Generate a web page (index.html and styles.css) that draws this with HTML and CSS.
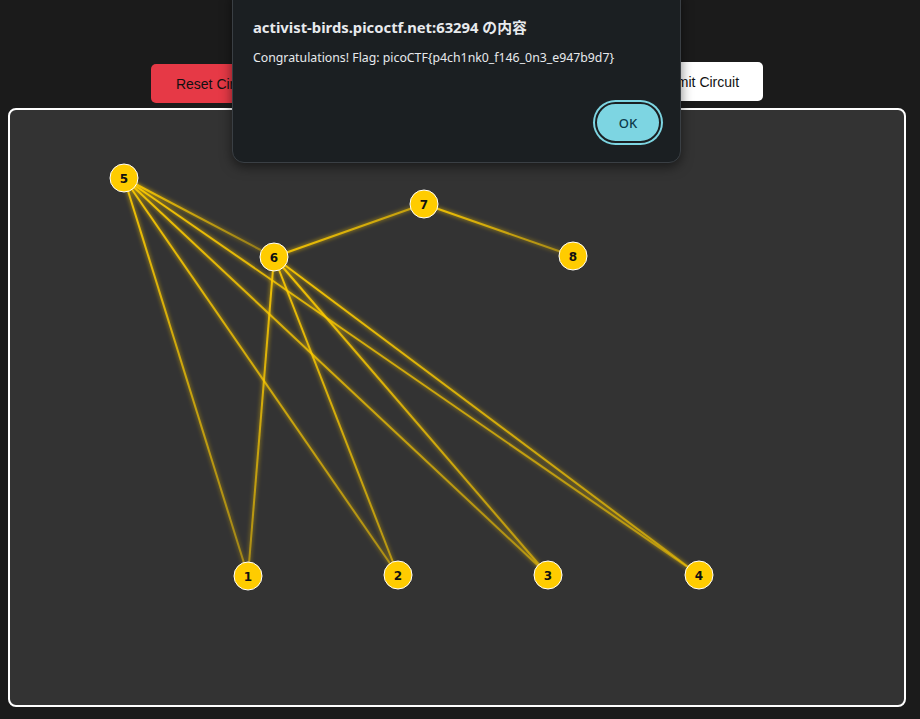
FILE: index.html
```
<!DOCTYPE html>
<html lang="ja">
<head>
<meta charset="utf-8">
<title>Circuit</title>
<link rel="stylesheet" href="styles.css">
</head>
<body>
<div class="controls">
  <button class="btn btn-reset">Reset Circuit</button>
  <button class="btn btn-submit">Submit Circuit</button>
</div>
<div class="board">
  <svg class="graph" width="894" height="595" viewBox="0 0 894 595">
    <defs>
      <filter id="glow" x="-20%" y="-20%" width="140%" height="140%">
        <feGaussianBlur stdDeviation="2" result="b"/>
        <feMerge><feMergeNode in="b"/><feMergeNode in="SourceGraphic"/></feMerge>
      </filter>
      <linearGradient id="g51" gradientUnits="userSpaceOnUse" x1="114" y1="68" x2="238" y2="466"><stop offset="0" stop-color="#ffcc00" stop-opacity="0.9"/><stop offset="1" stop-color="#ffcc00" stop-opacity="0.45"/></linearGradient>
      <linearGradient id="g52" gradientUnits="userSpaceOnUse" x1="114" y1="68" x2="388" y2="465"><stop offset="0" stop-color="#ffcc00" stop-opacity="0.9"/><stop offset="1" stop-color="#ffcc00" stop-opacity="0.5"/></linearGradient>
      <linearGradient id="g53" gradientUnits="userSpaceOnUse" x1="114" y1="68" x2="538" y2="465"><stop offset="0" stop-color="#ffcc00" stop-opacity="0.9"/><stop offset="1" stop-color="#ffcc00" stop-opacity="0.5"/></linearGradient>
      <linearGradient id="g54" gradientUnits="userSpaceOnUse" x1="114" y1="68" x2="689" y2="465"><stop offset="0" stop-color="#ffcc00" stop-opacity="0.9"/><stop offset="1" stop-color="#ffcc00" stop-opacity="0.5"/></linearGradient>
      <linearGradient id="g56" gradientUnits="userSpaceOnUse" x1="114" y1="68" x2="264" y2="147"><stop offset="0" stop-color="#ffcc00" stop-opacity="0.9"/><stop offset="1" stop-color="#ffcc00" stop-opacity="0.35"/></linearGradient>
      <linearGradient id="g61" gradientUnits="userSpaceOnUse" x1="264" y1="147" x2="238" y2="466"><stop offset="0" stop-color="#ffcc00" stop-opacity="0.9"/><stop offset="1" stop-color="#ffcc00" stop-opacity="0.5"/></linearGradient>
      <linearGradient id="g62" gradientUnits="userSpaceOnUse" x1="264" y1="147" x2="388" y2="465"><stop offset="0" stop-color="#ffcc00" stop-opacity="0.9"/><stop offset="1" stop-color="#ffcc00" stop-opacity="0.55"/></linearGradient>
      <linearGradient id="g63" gradientUnits="userSpaceOnUse" x1="264" y1="147" x2="538" y2="465"><stop offset="0" stop-color="#ffcc00" stop-opacity="0.9"/><stop offset="1" stop-color="#ffcc00" stop-opacity="0.55"/></linearGradient>
      <linearGradient id="g64" gradientUnits="userSpaceOnUse" x1="264" y1="147" x2="689" y2="465"><stop offset="0" stop-color="#ffcc00" stop-opacity="0.9"/><stop offset="1" stop-color="#ffcc00" stop-opacity="0.55"/></linearGradient>
      <linearGradient id="g67" gradientUnits="userSpaceOnUse" x1="264" y1="147" x2="414" y2="94"><stop offset="0" stop-color="#ffcc00" stop-opacity="0.9"/><stop offset="1" stop-color="#ffcc00" stop-opacity="0.6"/></linearGradient>
      <linearGradient id="g78" gradientUnits="userSpaceOnUse" x1="414" y1="94" x2="563" y2="146"><stop offset="0" stop-color="#ffcc00" stop-opacity="0.9"/><stop offset="1" stop-color="#ffcc00" stop-opacity="0.45"/></linearGradient>
    </defs>
    <g class="wires" filter="url(#glow)">
      <line x1="114" y1="68" x2="238" y2="466" stroke="url(#g51)"/>
      <line x1="114" y1="68" x2="388" y2="465" stroke="url(#g52)"/>
      <line x1="114" y1="68" x2="538" y2="465" stroke="url(#g53)"/>
      <line x1="114" y1="68" x2="689" y2="465" stroke="url(#g54)"/>
      <line x1="114" y1="68" x2="264" y2="147" stroke="url(#g56)"/>
      <line x1="264" y1="147" x2="238" y2="466" stroke="url(#g61)"/>
      <line x1="264" y1="147" x2="388" y2="465" stroke="url(#g62)"/>
      <line x1="264" y1="147" x2="538" y2="465" stroke="url(#g63)"/>
      <line x1="264" y1="147" x2="689" y2="465" stroke="url(#g64)"/>
      <line x1="264" y1="147" x2="414" y2="94" stroke="url(#g67)"/>
      <line x1="414" y1="94" x2="563" y2="146" stroke="url(#g78)"/>
    </g>
    <g class="nodes">
      <g transform="translate(114 68)"><circle r="14"/><text y="4.5">5</text></g>
      <g transform="translate(264 147)"><circle r="14"/><text y="4.5">6</text></g>
      <g transform="translate(414 94)"><circle r="14"/><text y="4.5">7</text></g>
      <g transform="translate(563 146)"><circle r="14"/><text y="4.5">8</text></g>
      <g transform="translate(238 466)"><circle r="14"/><text y="4.5">1</text></g>
      <g transform="translate(388 465)"><circle r="14"/><text y="4.5">2</text></g>
      <g transform="translate(538 465)"><circle r="14"/><text y="4.5">3</text></g>
      <g transform="translate(689 465)"><circle r="14"/><text y="4.5">4</text></g>
    </g>
  </svg>
</div>

<div class="dialog" role="alertdialog">
  <div class="dialog-title">activist-birds.picoctf.net:63294 の内容</div>
  <div class="dialog-msg">Congratulations! Flag: picoCTF{p4ch1nk0_f146_0n3_e947b9d7}</div>
  <div class="dialog-actions">
    <button class="ok">OK</button>
  </div>
</div>
</body>
</html>
```
FILE: styles.css
```
html, body {
  margin: 0;
  padding: 0;
}
body {
  background: #1b1b1b;
  padding: 8px;
  height: 719px;
  box-sizing: border-box;
  overflow: hidden;
  font-family: "Liberation Sans", "DejaVu Sans", sans-serif;
}
.controls {
  width: 612px;
  margin: 54px 0 0 143px;
  display: flex;
  justify-content: space-between;
  align-items: flex-start;
  height: 39px;
  margin-bottom: 7px;
}
.btn {
  height: 39px;
  border: none;
  border-radius: 5px;
  padding: 0 20px;
  font-family: "Comic Sans MS", "Liberation Sans", sans-serif;
  font-size: 14px;
  color: #111;
}
.btn-reset {
  background: #e63946;
  width: 130px;
  margin-top: 2px;
}
.btn-submit {
  background: #ffffff;
  width: 135px;
}
.board {
  width: 898px;
  height: 599px;
  box-sizing: border-box;
  border: 2px solid #ffffff;
  border-radius: 8px;
  background: #333333;
  overflow: hidden;
}
.graph {
  display: block;
}
.wires line {
  stroke-width: 2;
}
.nodes circle {
  fill: #ffcc00;
  stroke: #ffffff;
  stroke-width: 1;
}
.nodes text {
  font-family: "DejaVu Sans", sans-serif;
  font-weight: bold;
  font-size: 12px;
  text-anchor: middle;
  fill: #111;
}
.dialog {
  position: absolute;
  left: 232px;
  top: -12px;
  width: 449px;
  height: 175px;
  box-sizing: border-box;
  background: #1b1f22;
  border: 1px solid #3a3f44;
  border-radius: 12px;
  box-shadow: 0 4px 12px rgba(0,0,0,0.5);
  padding: 28px 20px 0 20px;
  color: #e8eaed;
  font-family: "Noto Sans", "Noto Sans CJK JP", sans-serif;
}
.dialog-title {
  font-size: 14.8px;
  font-weight: bold;
  line-height: 20px;
  color: #e8eaed;
}
.dialog-msg {
  margin-top: 12px;
  font-size: 12.3px;
  line-height: 18px;
  color: #e8eaed;
}
.dialog-actions {
  display: flex;
  justify-content: flex-end;
  margin-top: 35px;
}
.ok {
  width: 66px;
  height: 41px;
  border-radius: 21px;
  background: #7dd5e2;
  border: 2px solid #1b1f22;
  box-shadow: 0 0 0 2px #7dd5e2;
  color: #0b3a4a;
  font-family: "Noto Sans", sans-serif;
  font-size: 13px;
  font-weight: 500;
  margin-right: -1px;
}
```
